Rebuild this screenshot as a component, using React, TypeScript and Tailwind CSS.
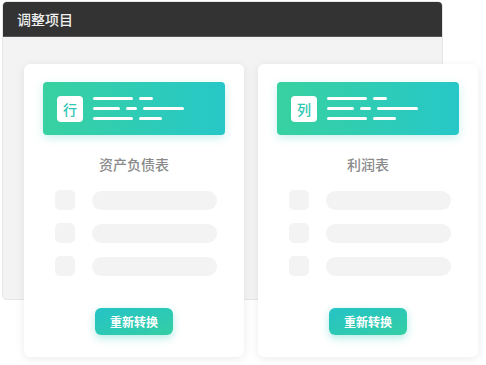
import React from "react";

const font = { fontFamily: '"Noto Sans CJK SC", "Noto Sans", sans-serif' };

function Lines() {
  return (
    <div className="flex flex-col gap-[7px]">
      <div className="flex gap-[6px]">
        <div className="h-[3px] w-[40px] rounded-full bg-white" />
        <div className="h-[3px] w-[14px] rounded-full bg-white" />
      </div>
      <div className="flex gap-[6px]">
        <div className="h-[3px] w-[27px] rounded-full bg-white" />
        <div className="h-[3px] w-[11px] rounded-full bg-white" />
        <div className="h-[3px] w-[41px] rounded-full bg-white" />
      </div>
      <div className="flex gap-[6px]">
        <div className="h-[3px] w-[40px] rounded-full bg-white" />
        <div className="h-[3px] w-[23px] rounded-full bg-white" />
      </div>
    </div>
  );
}

function Card({ badge, title }: { badge: string; title: string }) {
  return (
    <div className="w-[220px] h-[293px] rounded-[6px] bg-white shadow-[0_2px_10px_rgba(0,0,0,0.08)] flex flex-col items-center pt-[18px]">
      <div className="w-[182px] h-[53px] rounded-[4px] bg-gradient-to-r from-[#38d1a0] to-[#27c7c8] shadow-[0_3px_8px_rgba(40,200,190,0.25)] flex items-center pl-[14px] gap-[10px]">
        <div className="w-[26px] h-[26px] rounded-[4px] bg-white flex items-center justify-center text-[14px] font-medium text-[#2fc6b4] leading-none">
          {badge}
        </div>
        <Lines />
      </div>
      <div className="mt-[19px] text-[14px] leading-[20px] font-medium text-[#8a8a8a]">{title}</div>
      <div className="mt-[16px] self-start ml-[31px] flex flex-col gap-[13px] w-[162px]">
        {[0, 1, 2].map((i) => (
          <div key={i} className="flex items-center gap-[17px]">
            <div className="w-[20px] h-[20px] rounded-[5px] bg-[#f3f3f3]" />
            <div className="w-[125px] h-[19px] rounded-full bg-[#f3f3f3]" />
          </div>
        ))}
      </div>
      <div className="mt-[32px] w-[78px] h-[27px] rounded-[6px] bg-gradient-to-br from-[#25c3c6] to-[#34cea4] shadow-[0_3px_8px_rgba(40,200,180,0.35)] flex items-center justify-center text-[12px] font-bold text-white">
        重新转换
      </div>
    </div>
  );
}

export default function App() {
  return (
    <div className="relative w-[486px] h-[365px] bg-white overflow-hidden" style={font}>
      <div className="ml-[2px] mt-[1px] w-[441px] h-[299px] rounded-[5px] bg-[#f3f3f3] border border-[#e6e6e6] overflow-hidden">
        <div className="h-[35px] bg-[#333333] flex items-center pl-[14px] text-[14px] font-medium text-[#f0f0f0] border-b border-[#555]">
          调整项目
        </div>
      </div>
      <div className="absolute left-[24px] top-[64px] flex gap-[14px]">
        <Card badge="行" title="资产负债表" />
        <Card badge="列" title="利润表" />
      </div>
    </div>
  );
}
